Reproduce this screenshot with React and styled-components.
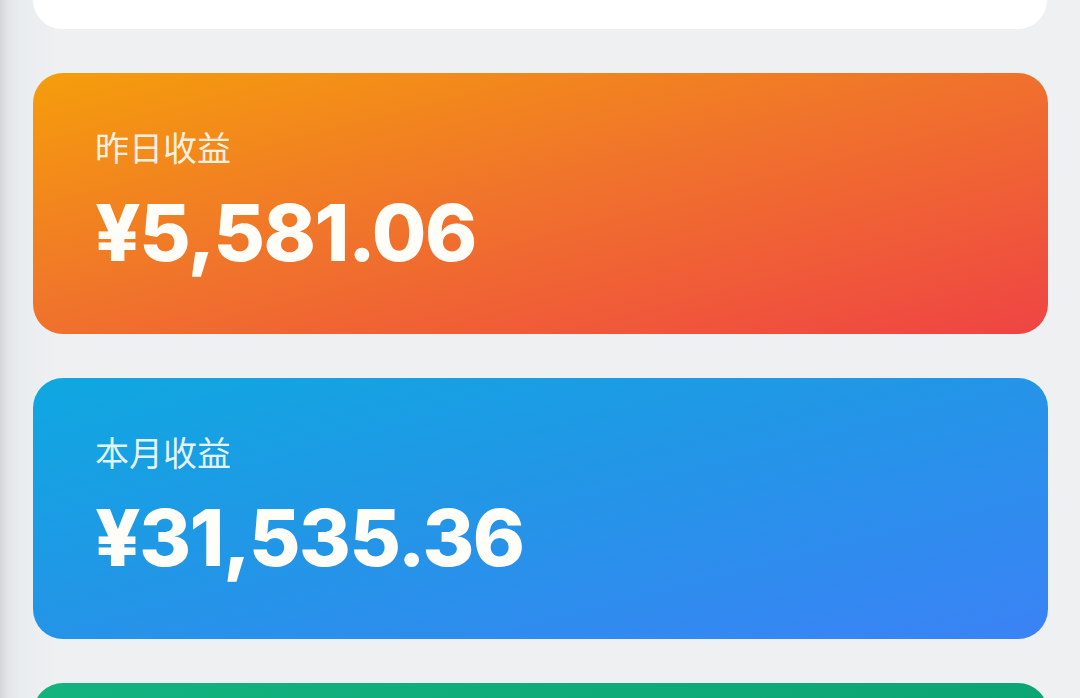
import styled, { createGlobalStyle } from 'styled-components'

const GlobalStyle = createGlobalStyle`
  html, body {
    margin: 0;
    padding: 0;
  }

  body {
    height: 698px;
    overflow: hidden;
    background: linear-gradient(to right, #d3d5d8 0, #e3e5e8 8px, #eaedef 20px, #eef0f2 60px, #eef0f2 100%);
    font-family: "Noto Sans", "Noto Sans CJK SC", sans-serif;
  }
`

const Page = styled.div`
  display: flex;
  flex-direction: column;
  gap: 44px;
  padding: 0 32px 0 33px;
`

const TopCard = styled.div`
  height: 29px;
  margin-right: 1px;
  background: #ffffff;
  border-radius: 0 0 30px 30px;
`

const gradients = {
  orange: 'linear-gradient(to bottom right, #f59e0b, #f0752a 45%, #ef4444)',
  blue: 'linear-gradient(to bottom right, #0ea8e0, #2296e6 45%, #3b82f6)',
  green: 'linear-gradient(to bottom right, #12b47e, #059669)'
}

const Card = styled.div`
  height: 261px;
  flex-shrink: 0;
  box-sizing: border-box;
  padding: 54px 62px 0;
  border-radius: 30px;
  background: ${props => gradients[props.tone]};
  color: #ffffff;
  display: flex;
  flex-direction: column;
`

const Label = styled.div`
  font-family: "Noto Sans CJK SC", sans-serif;
  font-size: 34px;
  line-height: 40px;
  color: rgba(255, 255, 255, 0.9);
`

const Amount = styled.div`
  margin-top: 20px;
  font-family: Inter, "Noto Sans", sans-serif;
  font-weight: 800;
  font-size: 79px;
  line-height: 90px;
  letter-spacing: -1.5px;
  color: #fffdf8;
`

const cards = [
  { tone: 'orange', label: '昨日收益', amount: '¥5,581.06' },
  { tone: 'blue', label: '本月收益', amount: '¥31,535.36' },
  { tone: 'green' }
]

const App = () => {
  return (
    <>
      <GlobalStyle />
      <Page>
        <TopCard />
        {cards.map(card => (
          <Card key={card.tone} tone={card.tone}>
            {card.label && <Label>{card.label}</Label>}
            {card.amount && <Amount>{card.amount}</Amount>}
          </Card>
        ))}
      </Page>
    </>
  )
}

export default App
